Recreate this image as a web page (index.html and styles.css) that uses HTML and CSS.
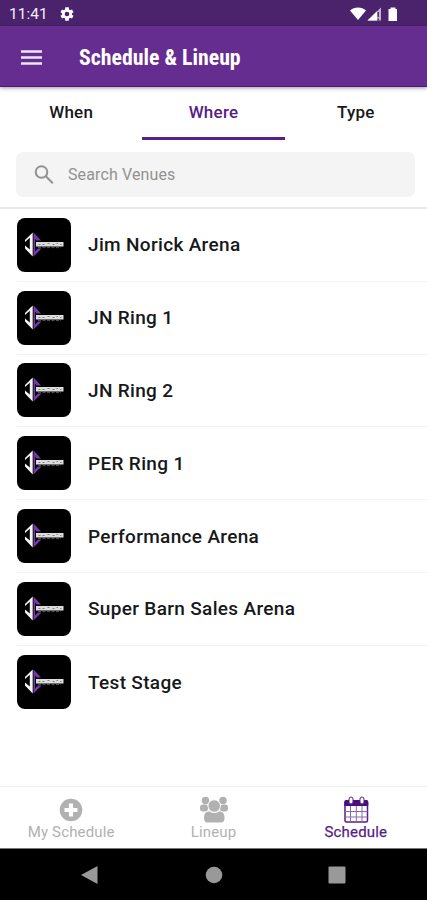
FILE: index.html
```html
<!DOCTYPE html>
<html lang="en">
<head>
<meta charset="utf-8">
<title>Schedule &amp; Lineup</title>
<link rel="stylesheet" href="styles.css">
</head>
<body>
<svg width="0" height="0" class="defs">
  <symbol id="logo" viewBox="0 0 54 54">
    <path d="M15.700 14.500v24L8 30.500v-3l4.800 4V19.800L8 24v-2z" fill="#f4f4f4"/>
    <path d="M16.500 14.500L24 22.500h-4.500l-1.500-2v13l3-3h3.500l-8 8z" fill="#7539a8"/>
    <path d="M19 24h27.500v4.500H19z" fill="#dcdcdc"/>
    <path d="M21.500 26.500h2m2 0h2m3-1h2m3 1h2m2-1h1.500m2 1h1.500" stroke="#777" stroke-width=".9"/>
    <path d="M21 29.600h23" stroke="#555" stroke-width="1" stroke-dasharray="3 1.500"/>
  </symbol>
</svg>
<div class="status">
  <span class="time">11:41</span>
  <svg class="gear" width="16" height="16" viewBox="0 0 24 24"><path fill="#fff" fill-rule="evenodd" d="M19.4 13a7.5 7.5 0 0 0 0-2l2.4-1.800-2.300-4-2.800 1.100a8 8 0 0 0-1.700-1L14.600 2H9.400L9 5.300a8 8 0 0 0-1.700 1L4.500 5.200l-2.300 4L4.600 11a7.500 7.500 0 0 0 0 2l-2.400 1.800 2.300 4 2.800-1.100a8 8 0 0 0 1.700 1l.4 3.300h5.200l.4-3.300a8 8 0 0 0 1.700-1l2.800 1.100 2.300-4zM12 8.500a3.500 3.500 0 1 1 0 7 3.500 3.500 0 0 1 0-7z"/></svg>
  <svg class="signals" width="50" height="16" viewBox="0 0 50 16">
    <path d="M1 4.500C5 .5 13 .5 17 4.500L9 14z" fill="#fff"/>
    <path d="M18.500 14.500L32 1.500v13z" fill="#c3b4ce"/><path d="M18.500 14.500L28 5.300v9.200z" fill="#fff"/><path d="M29.200 6v5m0 1.500v2" stroke="#4b236c" stroke-width="1.400"/>
    <path d="M39.500 3h2V1.500h5V3h1.500v12h-8.500z" fill="#fff"/>
  </svg>
</div>
<header class="appbar">
  <svg width="21" height="16" viewBox="0 0 21 16"><path d="M0 2.500h21M0 8.500h21M0 14.500h21" stroke="#eee5f5" stroke-width="2.300"/></svg>
  <h1>Schedule &amp; Lineup</h1>
</header>
<nav class="tabs">
  <div class="tab"><span>When</span></div>
  <div class="tab on"><span>Where</span></div>
  <div class="tab"><span>Type</span></div>
</nav>
<div class="searchwrap">
  <div class="search">
    <svg width="20" height="20" viewBox="0 0 20 20" fill="none" stroke="#929292" stroke-width="2"><circle cx="7.500" cy="7" r="5.800"/><path d="M11.800 11.300l7 7"/></svg>
    <span>Search Venues</span>
  </div>
</div>
<main class="list">
  <div class="row"><div class="tile"><svg width="54" height="54"><use href="#logo"/></svg></div><span>Jim Norick Arena</span></div>
  <div class="row"><div class="tile"><svg width="54" height="54"><use href="#logo"/></svg></div><span>JN Ring 1</span></div>
  <div class="row"><div class="tile"><svg width="54" height="54"><use href="#logo"/></svg></div><span>JN Ring 2</span></div>
  <div class="row"><div class="tile"><svg width="54" height="54"><use href="#logo"/></svg></div><span>PER Ring 1</span></div>
  <div class="row"><div class="tile"><svg width="54" height="54"><use href="#logo"/></svg></div><span>Performance Arena</span></div>
  <div class="row"><div class="tile"><svg width="54" height="54"><use href="#logo"/></svg></div><span>Super Barn Sales Arena</span></div>
  <div class="row"><div class="tile"><svg width="54" height="54"><use href="#logo"/></svg></div><span>Test Stage</span></div>
</main>
<nav class="bottom">
  <div class="item">
    <svg width="30" height="28" viewBox="0 0 30 28"><circle cx="15" cy="14" r="11.300" fill="#b1b1b1"/><path d="M15 7.500v13M8.500 14h13" stroke="#fff" stroke-width="4.200"/></svg>
    <span>My Schedule</span>
  </div>
  <div class="item">
    <svg width="30" height="28" viewBox="0 0 30 28" fill="#b1b1b1"><circle cx="7.500" cy="4.500" r="3.700"/><circle cx="25" cy="4.500" r="3.700"/><rect x="2" y="8.500" width="8" height="7" rx="3"/><rect x="22" y="8.500" width="8" height="7" rx="3"/><circle cx="16.200" cy="10" r="6.200" stroke="#fff" stroke-width=".8"/><path d="M6 22c0-4.500 2-6.500 5.500-6.500 3 2 6.500 2 9.500 0 3.500 0 5.500 2 5.500 6.500 0 3-1.200 4.500-3.500 4.500H9.500C7.200 26.500 6 25 6 22z"/></svg>
    <span>Lineup</span>
  </div>
  <div class="item on">
    <svg width="30" height="28" viewBox="0 0 30 28"><rect x="4" y="5" width="22.500" height="21" rx="1.500" fill="#fff" stroke="#571e89" stroke-width="1.500"/><path d="M3.300 10V6q0-2 2-2h20q2 0 2 2v4z" fill="#48107c"/><path d="M9.500 10V26M15.300 10V26M21 10V26M4 15.500h22.500M4 21h22.500" stroke="#8d68ad" stroke-width="1"/><rect x="8" y="1" width="4" height="7" rx="2" fill="#fff" stroke="#571e89"/><rect x="19" y="1" width="4" height="7" rx="2" fill="#fff" stroke="#571e89"/></svg>
    <span>Schedule</span>
  </div>
</nav>
<footer class="system">
  <div><svg width="18" height="20" viewBox="0 0 18 20"><path d="M0 10L16.500 1v18z" fill="#999"/></svg></div>
  <div><svg width="18" height="18" viewBox="0 0 18 18"><circle cx="9" cy="9" r="8.300" fill="#999"/></svg></div>
  <div><svg width="18" height="18" viewBox="0 0 18 18"><rect x=".5" y=".5" width="17" height="17" rx="1" fill="#999"/></svg></div>
</footer>
</body>
</html>
```
FILE: styles.css
```css
* { box-sizing: border-box; }
body {
  margin: 0;
  width: 427px;
  height: 900px;
  overflow: hidden;
  display: flex;
  flex-direction: column;
  background: #fff;
  color: #17181a;
  font-family: Roboto, "Liberation Sans", sans-serif;
}
svg { display: block; flex: none; }
.defs { position: absolute; }
.status {
  height: 26px;
  flex: none;
  display: flex;
  align-items: center;
  padding: 1px 28px 0 9px;
  background: #4b236c;
  color: #f4effa;
}
.time { width: 50px; font-size: 15.5px; line-height: 20px; }
.signals { margin-left: auto; }
.appbar {
  position: relative;
  height: 61px;
  flex: none;
  display: flex;
  align-items: center;
  gap: 37px;
  padding: 1px 21px 0;
  background: #662d91;
  border-bottom: 1px solid #501580;
  box-shadow: 0 1px 4px rgba(0, 0, 0, .4);
}
h1 {
  margin: 2px 0 0;
  color: #fff;
  font-family: "Roboto Condensed", Roboto, sans-serif;
  font-size: 21.8px;
  font-weight: 700;
  font-stretch: 75%;
  line-height: 28px;
  white-space: nowrap;
}
.tabs { height: 53px; flex: none; display: flex; }
.tab {
  flex: 1;
  text-align: center;
  font-size: 17px;
  letter-spacing: .25px;
  font-weight: 500;
  line-height: 24px;
  padding-top: 13px;
}
.tab.on { color: #572087; border-bottom: 3px solid #572087; }
.searchwrap { height: 69px; flex: none; padding: 12px 12px 0 16px; border-bottom: 2px solid #e8e8e8; }
.search {
  height: 45px;
  display: flex;
  align-items: center;
  gap: 14px;
  padding-left: 18px;
  border-radius: 7px;
  background: #f4f4f4;
  color: #929292;
  font-size: 16px;
  letter-spacing: .12px;
}
.list { flex: 1; }
.row {
  height: 72.8px;
  margin-left: 17px;
  display: flex;
  align-items: center;
  gap: 17px;
  border-bottom: 1px solid #f3f3f3;
  font-size: 19px;
  letter-spacing: .33px;
  font-weight: 500;
}
.row:last-child { border-bottom: 0; }
.tile { width: 54px; height: 54px; border-radius: 8px; background: #000; overflow: hidden; }
.bottom { height: 62px; flex: none; display: flex; border-top: 1px solid #f0f0f0; }
.item {
  flex: 1;
  display: flex;
  flex-direction: column;
  align-items: center;
  padding-top: 9px;
  color: #b1b1b1;
  font-size: 15px;
  letter-spacing: .15px;
  line-height: 16px;
}
.item.on { color: #571e89; }
.item.on span { -webkit-text-stroke: .25px #571e89; }
.system {
  height: 52px;
  flex: none;
  display: flex;
  justify-content: space-between;
  align-items: center;
  padding: 0 81px;
  border-top: 1px solid #777;
  background: #000;
}
```
